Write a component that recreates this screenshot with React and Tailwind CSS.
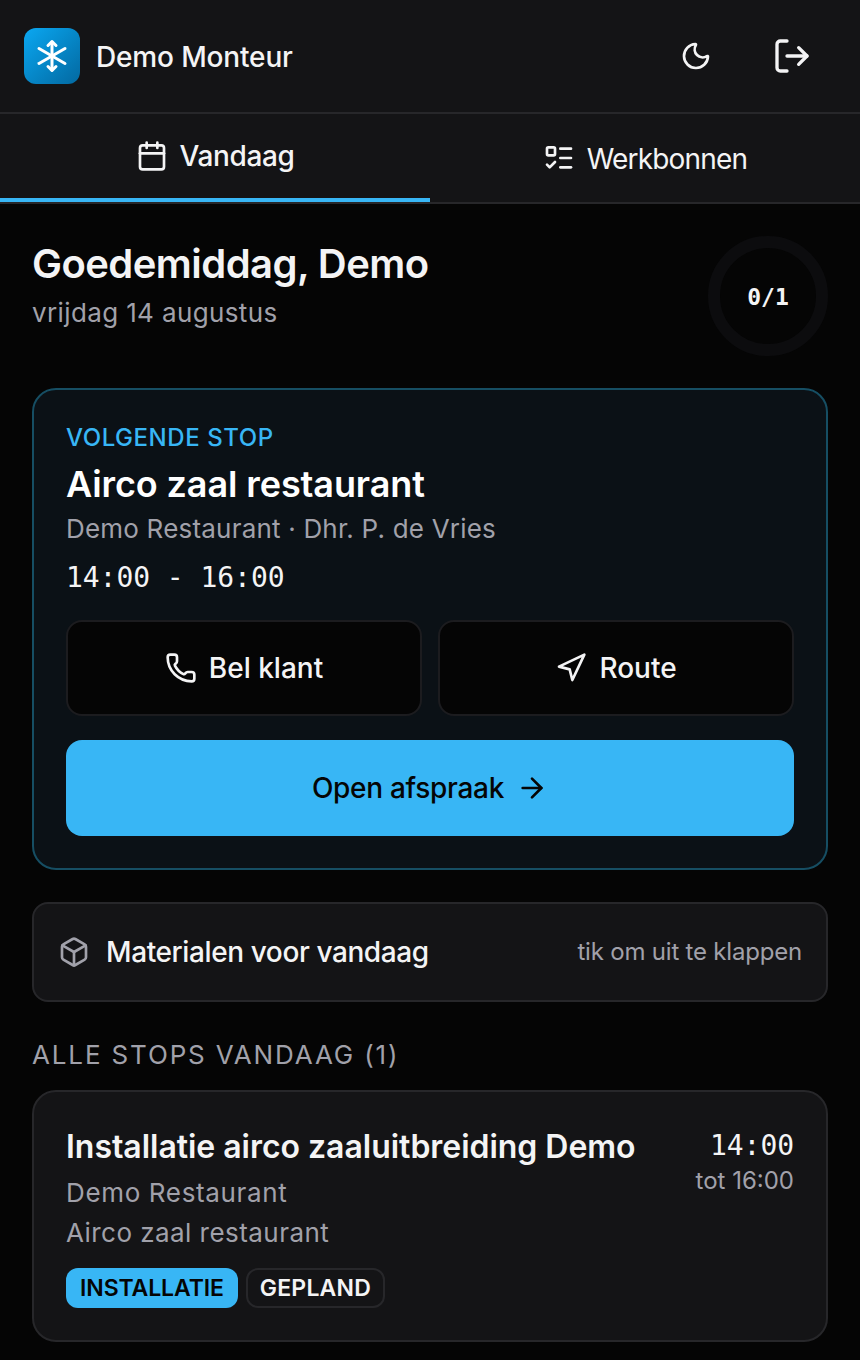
import { ArrowRight, Box, Calendar, ListTodo, LogOut, Moon, Navigation, Phone } from 'lucide-react';

const sans = 'font-["Inter",sans-serif]';

function Logo() {
  return (
    <div className="w-14 h-14 rounded-xl bg-gradient-to-br from-[#0ba8f2] to-[#0369a1] flex items-center justify-center">
      <svg width="32" height="34" viewBox="0 0 32 34" fill="none" stroke="white" strokeWidth="3" strokeLinecap="round" strokeLinejoin="round">
        <path d="M16 3v28" />
        <path d="M3 9.5l26 15" />
        <path d="M29 9.5l-26 15" />
        <path d="M12 6.5l4-4 4 4" />
        <path d="M12 27.5l4 4 4-4" />
      </svg>
    </div>
  );
}

function Header() {
  return (
    <header className="h-[114px] bg-[#141416] border-b-2 border-[#27272a] flex items-center justify-between pl-6 pr-12">
      <div className="flex items-center gap-4">
        <Logo />
        <h1 className="pt-0.5 text-[28px] font-medium tracking-[-0.15px] text-[#f4f4f5]">Demo Monteur</h1>
      </div>
      <div className="flex items-center gap-[60px]">
        <Moon size={32} strokeWidth={2} className="text-[#f4f4f5]" />
        <LogOut size={40} strokeWidth={2} className="text-[#f4f4f5]" />
      </div>
    </header>
  );
}

function Tabs() {
  return (
    <nav className="h-[90px] bg-[#141416] border-b-2 border-[#27272a] flex">
      <div className="w-1/2 h-[88px] border-b-4 border-[#38b6f5] flex items-center justify-center gap-3 text-[#f4f4f5] text-[28px] font-medium tracking-[-0.4px] -mb-0.5">
        <Calendar size={32} strokeWidth={2} />
        <span>Vandaag</span>
      </div>
      <div className="w-1/2 flex items-center justify-center gap-3 text-[#f4f4f5] text-[28px] tracking-[-0.8px]">
        <ListTodo size={32} strokeWidth={2} />
        <span className="pt-0.5">Werkbonnen</span>
      </div>
    </nav>
  );
}

function NextStop() {
  return (
    <section className="mt-8 h-[482px] rounded-3xl border-2 border-[#164e63] bg-[#0b1116] p-8 flex flex-col">
      <p className="text-2xl leading-8 font-medium tracking-[0.55px] text-[#38b6f5]">VOLGENDE STOP</p>
      <h2 className="mt-[7px] text-[36px] leading-[46px] font-semibold tracking-[-0.1px] text-white">Airco zaal restaurant</h2>
      <p className="mt-1 text-[26px] leading-9 tracking-[0.2px] text-[#a1a1aa]">Demo Restaurant · Dhr. P. de Vries</p>
      <p className='mt-[13px] font-["DejaVu_Sans_Mono",monospace] text-[28px] leading-9 tracking-[-0.05px] text-[#f4f4f5]'>14:00 - 16:00</p>
      <div className="mt-6 grid grid-cols-2 gap-4">
        <button className="h-24 rounded-2xl border-2 border-[#1c1c1f] bg-[#050505] flex items-center justify-center gap-3 text-[28px] font-medium text-[#f4f4f5]">
          <Phone size={32} strokeWidth={2} />
          Bel klant
        </button>
        <button className="h-24 rounded-2xl border-2 border-[#1c1c1f] bg-[#050505] flex items-center justify-center gap-3 text-[28px] font-medium text-[#f4f4f5]">
          <Navigation size={32} strokeWidth={2} />
          Route
        </button>
      </div>
      <button className="mt-6 h-24 rounded-2xl bg-[#38b6f5] flex items-center justify-center gap-3 text-[28px] font-medium tracking-[-0.3px] text-[#050505]">
        Open afspraak
        <ArrowRight size={32} strokeWidth={2} />
      </button>
    </section>
  );
}

function Materials() {
  return (
    <section className="mt-8 h-[100px] rounded-2xl border-2 border-[#27272a] bg-[#141416] flex items-center justify-between px-6">
      <div className="flex items-center gap-4">
        <Box size={32} strokeWidth={2} className="text-[#a1a1aa]" />
        <span className="text-[28px] font-medium tracking-[-0.4px] text-[#f4f4f5]">Materialen voor vandaag</span>
      </div>
      <span className="text-2xl tracking-[-0.2px] text-[#a1a1aa]">tik om uit te klappen</span>
    </section>
  );
}

function StopCard() {
  return (
    <article className="mt-[17px] h-[252px] rounded-3xl border-2 border-[#27272a] bg-[#141416] px-8 pt-[34px] flex justify-between">
      <div>
        <h3 className="pt-px text-[32px] leading-10 font-semibold tracking-[-0.03px] text-[#f4f4f5]">Installatie airco zaaluitbreiding Demo</h3>
        <p className="mt-1.5 text-[26px] leading-10 tracking-[0.65px] text-[#a1a1aa]">Demo Restaurant</p>
        <p className="text-[26px] leading-10 tracking-[0.45px] text-[#a1a1aa]">Airco zaal restaurant</p>
        <div className="mt-[15px] flex gap-2">
          <span className="h-10 px-[14px] rounded-xl bg-[#38b6f5] flex items-center text-[23px] font-semibold tracking-[-0.1px] text-[#050505]">INSTALLATIE</span>
          <span className="h-10 px-3 rounded-xl border-2 border-[#27272a] flex items-center text-[23px] font-semibold tracking-[0.2px] text-[#f4f4f5]">GEPLAND</span>
        </div>
      </div>
      <div className="text-right">
        <p className='font-["DejaVu_Sans_Mono",monospace] text-[28px] leading-10 tracking-[-0.05px] text-[#f4f4f5]'>14:00</p>
        <p className="text-2xl leading-[30px] text-[#a1a1aa]">tot 16:00</p>
      </div>
    </article>
  );
}

export default function App() {
  return (
    <div className={`${sans} w-[860px] h-[1360px] overflow-hidden bg-[#050505]`}>
      <Header />
      <Tabs />
      <main className="px-8 pt-8">
        <div className="flex items-start justify-between">
          <div>
            <h2 className="text-[40px] leading-[56px] font-semibold tracking-[-0.55px] text-[#f4f4f5]">Goedemiddag, Demo</h2>
            <p className="mt-[3px] text-[26px] leading-9 tracking-[0.37px] text-[#a1a1aa]">vrijdag 14 augustus</p>
          </div>
          <div className="w-[120px] h-[120px] rounded-full border-[12px] border-[#0c0c0e] flex items-center justify-center font-['DejaVu_Sans_Mono',monospace] text-[23px] font-bold pt-0.5 text-[#f4f4f5]">
            0/1
          </div>
        </div>
        <NextStop />
        <Materials />
        <p className="mt-[35px] text-[26px] leading-9 tracking-[1.85px] text-[#a1a1aa]">ALLE STOPS VANDAAG (1)</p>
        <StopCard />
      </main>
    </div>
  );
}
